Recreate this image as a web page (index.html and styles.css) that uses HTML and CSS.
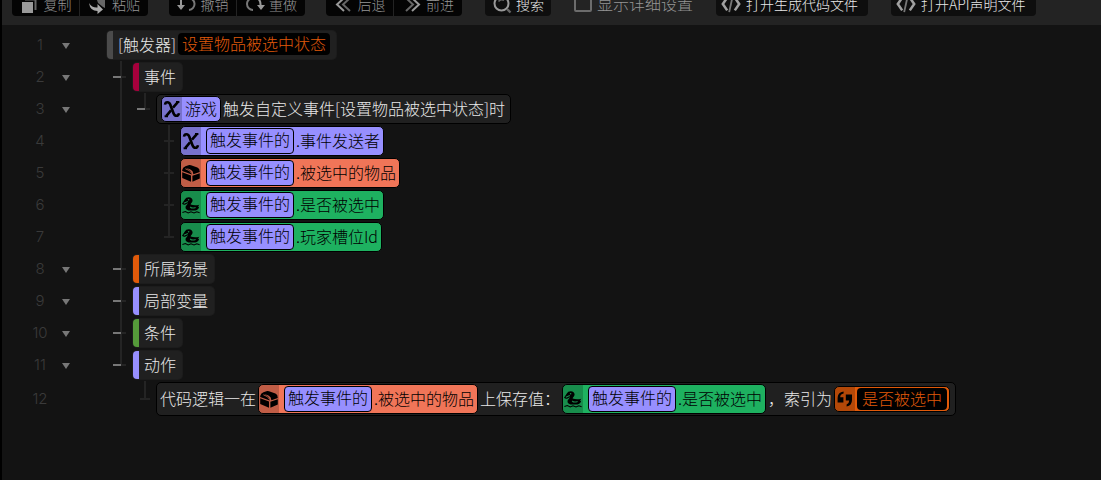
FILE: index.html
```html
<!DOCTYPE html>
<html lang="zh">
<head>
    <meta charset="UTF-8">
    <meta name="viewport" content="width=device-width, initial-scale=1.0">
    <title>触发器编辑器</title>
    <link rel="stylesheet" href="styles.css">
</head>
<body>
    <svg class="icon-defs" aria-hidden="true">
        <symbol id="icon-game" viewBox="0 0 20 20">
            <path d="M3 5.6Q3.4 3.2 5.4 3.2Q7.6 3.2 8.4 6L11.4 14Q12.4 16.8 14.4 16.8Q16.4 16.8 17 14.2" fill="none" stroke="currentColor" stroke-width="2.6"/>
            <path d="M15.6 3.4L11 8.6M9 11.4L4.400 16.8" fill="none" stroke="currentColor" stroke-width="2.6"/>
            <path d="M14 3h3.400M2.600 17.200h3.400" stroke="currentColor" stroke-width="2"/>
        </symbol>
        <symbol id="icon-item" viewBox="0 0 20 20">
            <path d="M1.2 7Q1.6 4.2 4.4 3.2L8.2 2Q9 1.8 10 2.2L16.4 4.6Q18.8 5.6 18.8 9L12.4 11.2Q12.2 8 9.4 6.6L5.4 5L8 6.8Q10.6 8 10.8 11.4L1.2 8Z" fill="currentColor"/>
            <path d="M1.2 9.2L10 12.6V18.8L1.2 15ZM11.4 12.8L18.8 10.2V15.6L11.4 18.8Z" fill="currentColor"/>
            <path d="M4.400 5.800Q9 7 10.600 10.400" fill="none" stroke="#c05e46" stroke-width="0.900"/>
        </symbol>
        <symbol id="icon-duck" viewBox="0 0 20 20">
            <path d="M1 8.8L3.800 4.600Q4.800 2.200 7.800 2.200Q11.400 2.400 11.600 5.600Q11.600 7.200 10 8.600L9.600 9.600Q13.600 11 18.4 9.8L16.8 11.800H18.200Q17.400 15.200 14.4 15.4H7.4Q4 14.8 4.6 11.6L7.200 8L4.6 9.6Q2.600 10.400 1 8.8Z" fill="currentColor"/>
            <path d="M2.800 8.200L6.800 6.400M9.2 12Q11 13.8 14.6 12.4" fill="none" stroke="#188d4d" stroke-width="1.1"/>
            <circle cx="7.600" cy="4.800" r="0.800" fill="#188d4d"/>
            <path d="M1.4 17.6L4.4 16.6L7.2 18L10 16.8L13 18L15.8 16.8L18.6 17.8" fill="none" stroke="currentColor" stroke-width="1.1"/>
        </symbol>
        <symbol id="icon-text" viewBox="0 0 20 20">
            <path d="M8.6 4.4Q5.2 5 5.2 8.2H8.4V13.6H2.6V9Q2.6 3.6 8.6 2.6Z" fill="currentColor"/>
            <path d="M10.8 5.4H17V11Q17 16.6 11.6 17.4V15.4Q14.2 14.6 14.2 11.6H10.8Z" fill="currentColor"/>
        </symbol>
        <symbol id="icon-code" viewBox="0 0 22 20">
            <path d="M6.8 3L2 10L6.8 17M15.2 3L20 10L15.2 17" fill="none" stroke="#a0a0a0" stroke-width="2.8"/>
            <path d="M12.8 1.5L9 19" stroke="#777" stroke-width="2"/>
        </symbol>
    </svg>

    <div class="toolbar">
        <div class="history">
            <div class="btn-group">
                <button type="button"><svg viewBox="0 0 20 20"><path d="M2 8H13V19H2Z" fill="#9a9a9a"/><path d="M5 5.500H15.500V16" fill="none" stroke="#666" stroke-width="2"/></svg>复制</button>
                <button type="button"><svg viewBox="0 0 20 20"><path d="M1 9Q4 14 9.500 13.500V10L15 15.500L9.500 20V17Q2 17 1 9Z" fill="#a8a8a8"/><path d="M8 3H17V14L15 13L10 9Z" fill="#666"/></svg>粘贴</button>
            </div>
            <div class="btn-group">
                <button type="button"><svg viewBox="0 0 20 20"><path d="M11 4A6 6 0 0 1 12 16" fill="none" stroke="#777" stroke-width="2"/><path d="M4 6V12" stroke="#999" stroke-width="2"/><path d="M0 11H8L4 16Z" fill="#999"/></svg>撤销</button>
                <button type="button"><svg viewBox="0 0 20 20"><path d="M8 4A6 6 0 0 0 8 16" fill="none" stroke="#777" stroke-width="2"/><path d="M12 4Q16 6 15.500 12" fill="none" stroke="#999" stroke-width="2"/><path d="M12 11H20L16 16Z" fill="#999"/></svg>重做</button>
            </div>
            <div class="btn-group">
                <button type="button"><svg viewBox="0 0 20 20"><path d="M10 4L3 10.500L10 17" fill="none" stroke="#999" stroke-width="2"/><path d="M16 4L9 10.500L16 17" fill="none" stroke="#666" stroke-width="2"/></svg>后退</button>
                <button type="button"><svg viewBox="0 0 20 20"><path d="M4 4L11 10.500L4 17" fill="none" stroke="#666" stroke-width="2"/><path d="M10 4L17 10.500L10 17" fill="none" stroke="#999" stroke-width="2"/></svg>前进</button>
            </div>
        </div>
        <button type="button" class="tool-btn"><svg viewBox="0 0 20 20"><circle cx="9.500" cy="9.500" r="7" fill="none" stroke="#999" stroke-width="2"/><path d="M6.500 7.500A4 4 0 0 1 12 6.500" fill="none" stroke="#666" stroke-width="1.500"/><path d="M15 15L18.500 18.500" stroke="#666" stroke-width="2.400"/></svg>搜索</button>
        <label class="detail-toggle"><input type="checkbox">显示详细设置</label>
        <button type="button" class="tool-btn file-btn"><svg viewBox="0 0 22 20"><use href="#icon-code"/></svg>打开生成代码文件</button>
        <button type="button" class="tool-btn file-btn"><svg viewBox="0 0 22 20"><use href="#icon-code"/></svg>打开API声明文件</button>
    </div>

    <main class="editor">
        <div class="row">
            <span class="line-no">1</span><span class="fold open"></span>
            <div class="node bar-gray">[触发器]<span class="literal">设置物品被选中状态</span></div>
        </div>
        <div class="row">
            <span class="line-no">2</span><span class="fold open"></span>
            <span class="guide line tick open"></span>
            <div class="node bar-red">事件</div>
        </div>
        <div class="row">
            <span class="line-no">3</span><span class="fold open"></span>
            <span class="guide line"></span><span class="guide line tick open last"></span>
            <div class="statement">
                <span class="chip violet"><svg class="chip-icon"><use href="#icon-game"/></svg><span class="chip-text">游戏</span></span>
                <span class="words">触发自定义事件[设置物品被选中状态]时</span>
            </div>
        </div>
        <div class="row">
            <span class="line-no">4</span><span class="fold"></span>
            <span class="guide line"></span><span class="guide"></span><span class="guide line tick"></span>
            <span class="chip violet"><svg class="chip-icon"><use href="#icon-game"/></svg><span class="arg">触发事件的</span><span class="prop">.事件发送者</span></span>
        </div>
        <div class="row">
            <span class="line-no">5</span><span class="fold"></span>
            <span class="guide line"></span><span class="guide"></span><span class="guide line tick"></span>
            <span class="chip coral"><svg class="chip-icon"><use href="#icon-item"/></svg><span class="arg">触发事件的</span><span class="prop">.被选中的物品</span></span>
        </div>
        <div class="row">
            <span class="line-no">6</span><span class="fold"></span>
            <span class="guide line"></span><span class="guide"></span><span class="guide line tick"></span>
            <span class="chip green"><svg class="chip-icon"><use href="#icon-duck"/></svg><span class="arg">触发事件的</span><span class="prop">.是否被选中</span></span>
        </div>
        <div class="row">
            <span class="line-no">7</span><span class="fold"></span>
            <span class="guide line"></span><span class="guide"></span><span class="guide line tick last"></span>
            <span class="chip green"><svg class="chip-icon"><use href="#icon-duck"/></svg><span class="arg">触发事件的</span><span class="prop">.玩家槽位Id</span></span>
        </div>
        <div class="row">
            <span class="line-no">8</span><span class="fold open"></span>
            <span class="guide line tick open"></span>
            <div class="node bar-orange">所属场景</div>
        </div>
        <div class="row">
            <span class="line-no">9</span><span class="fold open"></span>
            <span class="guide line tick open"></span>
            <div class="node bar-violet">局部变量</div>
        </div>
        <div class="row">
            <span class="line-no">10</span><span class="fold open"></span>
            <span class="guide line tick open"></span>
            <div class="node bar-green">条件</div>
        </div>
        <div class="row">
            <span class="line-no">11</span><span class="fold open"></span>
            <span class="guide line tick open last"></span>
            <div class="node bar-violet">动作</div>
        </div>
        <div class="row tall">
            <span class="line-no">12</span><span class="fold"></span>
            <span class="guide"></span><span class="guide line tick last"></span>
            <div class="statement">
                <span class="words">代码逻辑一在</span>
                <span class="chip coral"><svg class="chip-icon"><use href="#icon-item"/></svg><span class="arg">触发事件的</span><span class="prop">.被选中的物品</span></span>
                <span class="words">上保存值：</span>
                <span class="chip green"><svg class="chip-icon"><use href="#icon-duck"/></svg><span class="arg">触发事件的</span><span class="prop">.是否被选中</span></span>
                <span class="words">，索引为</span>
                <span class="chip orange"><svg class="chip-icon"><use href="#icon-text"/></svg><span class="literal">是否被选中</span></span>
            </div>
        </div>
    </main>
</body>
</html>
```
FILE: styles.css
```css
:root {
    --bg: #131313;
    --panel: #232323;
    --node: #202020;
    --guide: #242424;
    --text: #e8e8e8;
    --violet: #978fff;
    --coral: #f07558;
    --green: #1eb160;
    --orange: #e05a0a;
}

* {
    box-sizing: border-box;
}

body {
    margin: 0;
    min-height: 100vh;
    border-left: 2px solid #000;
    background: var(--bg);
    color: var(--text);
    font-family: "Noto Sans CJK SC", sans-serif;
    font-size: 16px;
    font-weight: 300;
    line-height: 24px;
}

.icon-defs {
    display: none;
}

/* toolbar */
.toolbar {
    display: flex;
    align-items: flex-end;
    gap: 23px;
    height: 25px;
    padding: 0 10px 9px;
    background: var(--panel);
    overflow: hidden;
    white-space: nowrap;
}

.history {
    display: flex;
    gap: 21px;
}

.btn-group {
    display: flex;
    gap: 1px;
    border-radius: 4px;
    overflow: hidden;
}

.toolbar button {
    display: flex;
    align-items: center;
    justify-content: center;
    gap: 4px;
    height: 24px;
    padding: 0 7px 1px;
    border: none;
    background: #0e0e0e;
    color: #e8e8e8;
    font: inherit;
    font-size: 14px;
    cursor: pointer;
}

.toolbar svg {
    width: 20px;
    height: 20px;
    flex: none;
}

.toolbar .btn-group button {
    width: 68px;
    background: #040404;
    color: #959595;
}

.btn-group button:first-child {
    width: 67px;
}

.toolbar .tool-btn {
    width: 66px;
    border-radius: 4px;
}

.toolbar .file-btn {
    gap: 5px;
    width: auto;
    padding: 0 10px 1px 5px;
}

.detail-toggle {
    display: flex;
    align-items: center;
    gap: 5px;
    height: 24px;
    padding-bottom: 2px;
    color: #959595;
}

.detail-toggle input {
    appearance: none;
    width: 18px;
    height: 18px;
    margin: 0;
    border: 2px solid #6c6c6c;
    border-radius: 2px;
}

/* code tree */
.editor {
    padding-top: 4px;
    overflow: hidden;
}

.row {
    display: flex;
    align-items: center;
    height: 32px;
    white-space: nowrap;
}

.row.tall {
    height: 36px;
}

.line-no {
    width: 32px;
    margin-left: 22px;
    color: #3a3a3a;
    font-family: Inter, sans-serif;
    font-size: 15px;
    text-align: center;
}

.fold {
    display: flex;
    justify-content: center;
    width: 20px;
    margin-right: 31px;
}

.fold.open::before {
    content: "";
    margin-top: 2px;
    border: 4px solid transparent;
    border-top: 6px solid #777;
    border-bottom: none;
}

.guide {
    position: relative;
    align-self: stretch;
    width: 24px;
    background-repeat: no-repeat;
}

.fold + .guide {
    width: 26px;
}

.guide + .statement,
.guide + .chip {
    margin-left: -1px;
}

.guide.line {
    background-image: linear-gradient(var(--guide), var(--guide));
    background-position: right 11px top;
    background-size: 2px 100%;
}

.guide.last {
    background-size: 2px 50%;
}

.guide.tick::after {
    content: "";
    position: absolute;
    right: 7px;
    top: 50%;
    width: 10px;
    height: 2px;
    margin-top: -1px;
    background: var(--guide);
}

.guide.open::after {
    width: 13px;
    background: linear-gradient(90deg, #777 8px, var(--guide) 8px);
}

.node {
    display: flex;
    align-items: center;
    height: 28px;
    padding: 0 6px 3px 5px;
    border-left: 6px solid var(--bar);
    border-radius: 4px;
    background: var(--node);
    box-shadow: 0 0 0 1px #1c1c1c;
}

.bar-gray { --bar: #4b4b4b; }
.bar-red { --bar: #a6003c; }
.bar-orange { --bar: var(--orange); }
.bar-violet { --bar: var(--violet); }
.bar-green { --bar: #559a3a; }

.literal {
    padding: 0 4px 2px;
    border-radius: 4px;
    background: #000;
    color: var(--orange);
    line-height: 20px;
}

.node .literal {
    margin-left: 2px;
}

.statement {
    display: flex;
    align-items: center;
    gap: 2px;
    height: 30px;
    padding: 0 5px 0 3px;
    border: 1px solid #000;
    border-radius: 5px;
    background: var(--node);
}

.tall .statement {
    height: 34px;
}

.row .statement .violet {
    margin-left: 1px;
}

.chip {
    display: flex;
    align-items: center;
    height: 30px;
    border: 1px solid #000;
    border-radius: 5px;
    background: var(--chip);
    color: #000;
    overflow: hidden;
}

.chip-icon {
    align-self: stretch;
    width: 20px;
    height: auto;
    background: rgba(0, 0, 0, 0.2);
}

.violet { --chip: var(--violet); }
.coral { --chip: var(--coral); }
.green { --chip: var(--green); }
.orange { --chip: var(--orange); }

.statement .violet,
.statement .orange {
    height: 26px;
}

.words {
    padding-bottom: 3px;
}

.chip-text {
    padding: 0 3px 3px;
}

.arg {
    margin-left: 5px;
    padding: 0 3px 3px;
    border: 1px solid #000;
    border-radius: 4px;
    background: var(--violet);
    line-height: 21px;
}

.prop {
    padding: 0 3px 3px 2px;
}

.orange .literal {
    margin: 0 2px;
    padding: 0 5px 2px;
}
```
